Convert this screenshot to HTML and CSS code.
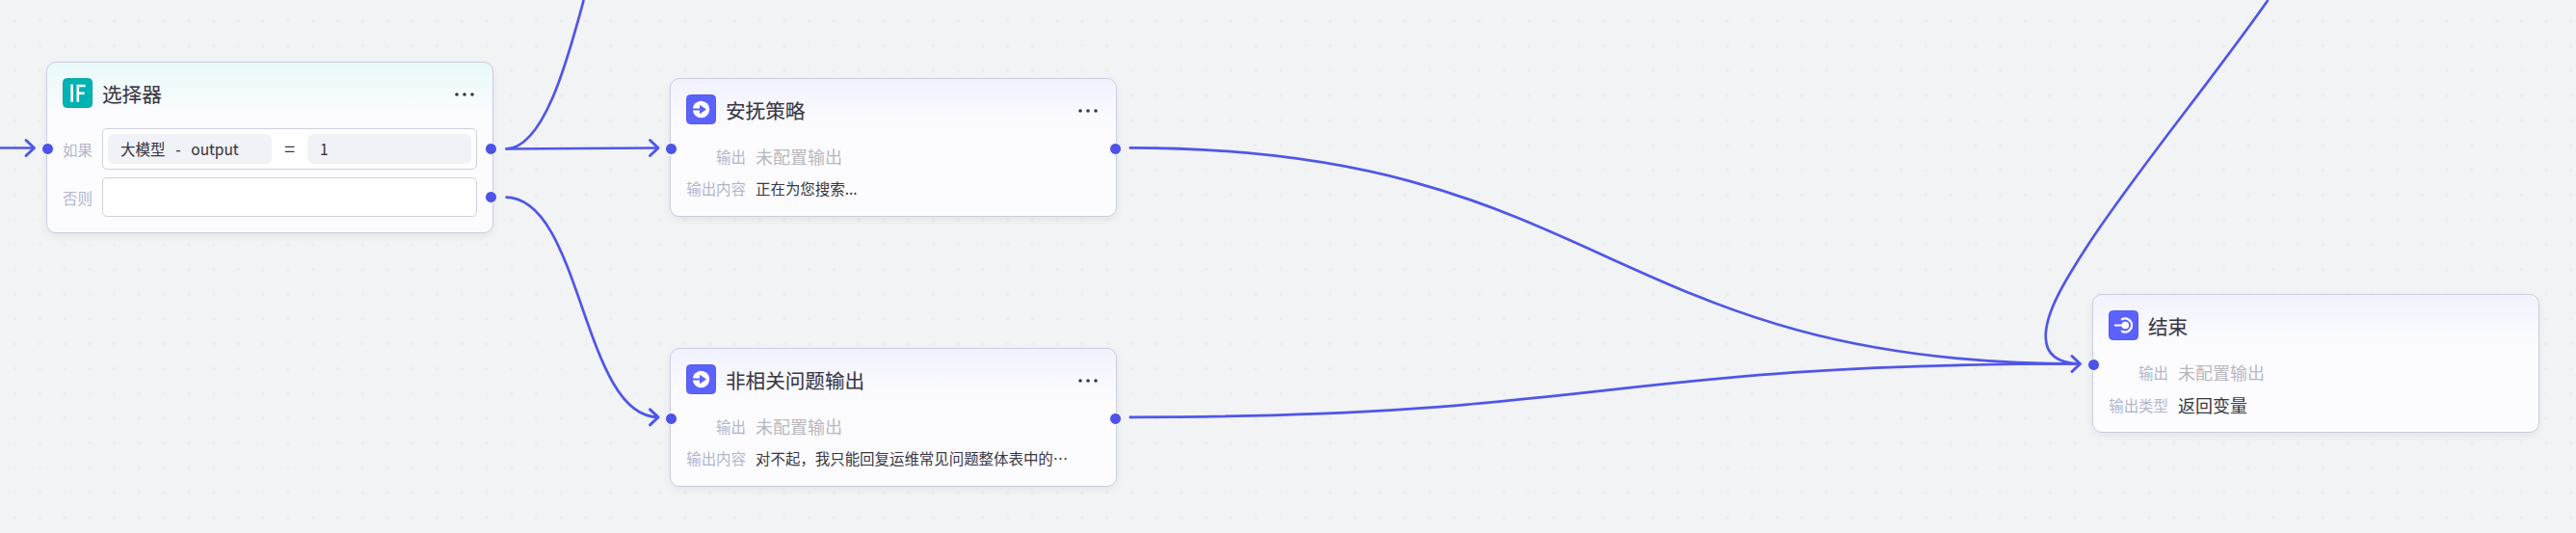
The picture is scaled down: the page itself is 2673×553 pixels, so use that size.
FILE: index.html
```
<!DOCTYPE html>
<html lang="zh">
<head>
    <meta charset="UTF-8">
    <meta name="viewport" content="width=device-width, initial-scale=1.0">
    <title>工作流</title>
    <link rel="stylesheet" href="styles.css">
</head>
<body>
    <div class="canvas">
        <!-- 连线 -->
        <svg class="edges" width="2673" height="553" viewBox="0 0 2673 553">
            <path d="M0 153.5H35"/>
            <path d="M524.5 154.5C565 154.5 590 58 605.7 0"/>
            <path d="M524.5 154.5L683 153.5"/>
            <path d="M524.5 204.7C604 204.7 604 432.8 683 432.8"/>
            <path d="M1171.7 153.3C1665 153.3 1665 377.5 2158 377.5"/>
            <path d="M1171.7 432.8C1665 432.8 1665 377.5 2158 377.5"/>
            <path d="M2353.5 0C2290 90 2218 176 2166.7 254C2140 295 2122.7 325 2122.7 349C2122.7 372 2141 377 2158 377.5"/>
            <path class="arrow" d="M27 145.5L35.5 153.5L27 161.5"/>
            <path class="arrow" d="M674.5 145.5L683 153.5L674.5 161.5"/>
            <path class="arrow" d="M674.5 424.8L683 432.8L674.5 440.8"/>
            <path class="arrow" d="M2150 369.5L2158.5 377.5L2150 385.5"/>
        </svg>

        <div class="node node-if">
            <div class="header">
                <svg class="icon" viewBox="0 0 31 31">
                    <rect x="0.5" y="0.5" width="30" height="30" rx="4" fill="#00b2b2" stroke="#0aa5a6"/>
                    <path d="M9.6 6.5V24.8M15.8 24.8V8H23.6M15.8 15.8H22.6" fill="none" stroke="#fff" stroke-width="2.6"/>
                </svg>
                <span class="title">选择器</span>
                <svg class="more" viewBox="0 0 20 4"><circle cx="2" cy="2" r="1.8"/><circle cx="10" cy="2" r="1.8"/><circle cx="18" cy="2" r="1.8"/></svg>
            </div>
            <div class="branch">
                <span class="label">如果</span>
                <div class="condition">
                    <div class="chip"><span>大模型</span><span class="dash">-</span><span>output</span></div>
                    <span class="operator">=</span>
                    <div class="chip">1</div>
                </div>
            </div>
            <div class="branch">
                <span class="label">否则</span>
                <div class="condition empty"></div>
            </div>
            <i class="port port-in"></i>
            <i class="port port-out"></i>
            <i class="port port-else"></i>
        </div>

        <div class="node node-comfort">
            <div class="header">
                <svg class="icon" viewBox="0 0 31 31">
                    <rect x="0.5" y="0.5" width="30" height="30" rx="4" fill="#5c62ff" stroke="#555be8"/>
                    <circle cx="15.5" cy="15.5" r="8.7" fill="#fff"/>
                    <path d="M6 14.4H14V10.8L21 15.5L14 20.2V16.6H6Z" fill="#5c62ff"/>
                </svg>
                <span class="title">安抚策略</span>
                <svg class="more" viewBox="0 0 20 4"><circle cx="2" cy="2" r="1.8"/><circle cx="10" cy="2" r="1.8"/><circle cx="18" cy="2" r="1.8"/></svg>
            </div>
            <div class="row"><span class="label">输出</span><span class="value unset">未配置输出</span></div>
            <div class="row"><span class="label">输出内容</span><span class="value">正在为您搜索...</span></div>
            <i class="port port-in"></i>
            <i class="port port-out"></i>
        </div>

        <div class="node node-unrelated">
            <div class="header">
                <svg class="icon" viewBox="0 0 31 31">
                    <rect x="0.5" y="0.5" width="30" height="30" rx="4" fill="#5c62ff" stroke="#555be8"/>
                    <circle cx="15.5" cy="15.5" r="8.7" fill="#fff"/>
                    <path d="M6 14.4H14V10.8L21 15.5L14 20.2V16.6H6Z" fill="#5c62ff"/>
                </svg>
                <span class="title">非相关问题输出</span>
                <svg class="more" viewBox="0 0 20 4"><circle cx="2" cy="2" r="1.8"/><circle cx="10" cy="2" r="1.8"/><circle cx="18" cy="2" r="1.8"/></svg>
            </div>
            <div class="row"><span class="label">输出</span><span class="value unset">未配置输出</span></div>
            <div class="row"><span class="label">输出内容</span><span class="value">对不起，我只能回复运维常见问题整体表中的⋯</span></div>
            <i class="port port-in"></i>
            <i class="port port-out"></i>
        </div>

        <div class="node node-end">
            <div class="header">
                <svg class="icon" viewBox="0 0 31 31">
                    <rect x="0.5" y="0.5" width="30" height="30" rx="4" fill="#5c62ff" stroke="#555be8"/>
                    <circle cx="17.3" cy="15.5" r="3.8" fill="#fff"/>
                    <path d="M6.8 15.5H16M13.8 9.3A7 7 0 1 1 13.8 21.7" fill="none" stroke="#fff" stroke-width="2.1" stroke-linecap="round"/>
                </svg>
                <span class="title">结束</span>
            </div>
            <div class="row"><span class="label">输出</span><span class="value unset">未配置输出</span></div>
            <div class="row"><span class="label">输出类型</span><span class="value large">返回变量</span></div>
            <i class="port port-in"></i>
        </div>
    </div>
</body>
</html>
```
FILE: styles.css
```
* {
    box-sizing: border-box;
}
body {
    margin: 0;
    font-family: "Noto Sans CJK SC", "Noto Sans", sans-serif;
    font-size: 15.45px;
    color: #383743;
}
.canvas {
    position: relative;
    width: 2673px;
    height: 553px;
    overflow: hidden;
    background-color: #f1f3f5;
    background-image: radial-gradient(circle, #ebedf0 1.4px, transparent 2.1px);
    background-size: 25.765px 25.765px;
    background-position: 2.8px 9.1px;
}
.edges {
    display: block;
    fill: none;
    stroke: #5056e8;
    stroke-width: 2.7;
}
.arrow {
    stroke-width: 3;
    stroke-linecap: round;
    stroke-linejoin: round;
}

/* 节点 */
.node {
    position: absolute;
    width: 464px;
    height: 144px;
    padding: 16px;
    border: 1px solid #cacce0;
    border-radius: 10px;
    background: #fcfcff linear-gradient(#f2f2ff, #fcfcff 54px) no-repeat;
    box-shadow: 0 3px 8px rgba(0, 0, 0, 0.06);
}
.node-if {
    left: 48px;
    top: 64px;
    height: 178px;
    background-image: linear-gradient(#e8f9f9, #fcfcff 54px);
}
.node-comfort {
    left: 695px;
    top: 81px;
}
.node-unrelated {
    left: 695px;
    top: 361px;
}
.node-end {
    left: 2171px;
    top: 305px;
}
.header {
    display: flex;
    align-items: center;
    height: 31px;
    margin-bottom: 21px;
}
.icon {
    width: 31px;
    height: 31px;
    margin-right: 10px;
}
.title {
    flex: 1;
    font-size: 20.6px;
    line-height: 28px;
    -webkit-text-stroke: 0.1px;
}
.more {
    width: 20px;
    height: 4px;
    margin: 2px 3px 0 0;
    fill: #383743;
}
.row {
    display: flex;
    align-items: center;
    height: 24px;
    margin-bottom: 9px;
    line-height: 24px;
    white-space: nowrap;
}
.node-end .row {
    margin-bottom: 10px;
}
.label {
    color: #b2b5cb;
}
.row .label {
    width: 62px;
    margin-right: 10px;
    text-align: right;
}
.value.unset {
    font-size: 18px;
    color: #b8b8bd;
}
.value.large {
    font-size: 18px;
}

/* 条件分支 */
.branch {
    display: flex;
    align-items: center;
    margin-bottom: 8px;
}
.branch .label {
    width: 31px;
    margin-right: 10px;
}
.condition {
    display: flex;
    align-items: center;
    flex: 1;
    height: 43px;
    padding: 0 5px;
    border: 1px solid #cdd0e1;
    border-radius: 5px;
    background: #fff;
}
.condition.empty {
    height: 41px;
}
.chip {
    display: flex;
    align-items: center;
    width: 170px;
    height: 31px;
    padding: 0 0 2px 13px;
    border-radius: 6px;
    background: #f1f2f8;
    -webkit-text-stroke: 0.1px;
}
.dash {
    width: 27px;
    text-align: center;
}
.operator {
    width: 37px;
    padding-bottom: 2px;
    text-align: center;
    font-size: 20px;
    line-height: 24px;
}

/* 连接点 */
.port {
    position: absolute;
    width: 13px;
    height: 13px;
    border: 1.4px solid #fff;
    border-radius: 50%;
    background: #4d53e8;
}
.port-in {
    left: -6px;
    top: 66px;
}
.port-out {
    right: -6px;
    top: 66px;
}
.node-if .port-in,
.node-if .port-out {
    top: 83px;
}
.node-if .port-out,
.port-else {
    right: -5px;
}
.port-else {
    top: 133px;
}
```
